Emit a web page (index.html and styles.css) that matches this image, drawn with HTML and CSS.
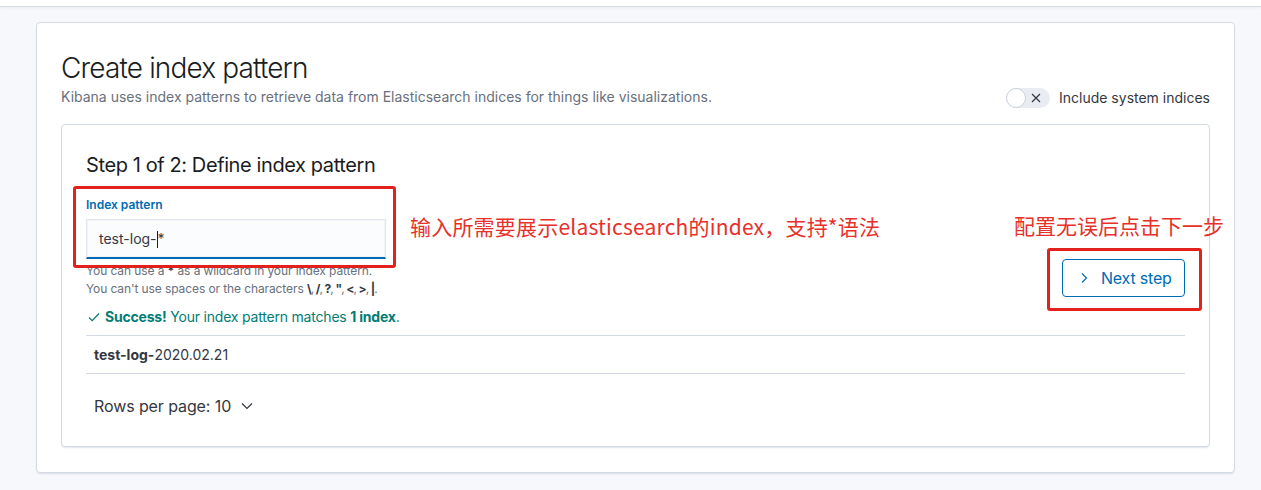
FILE: index.html
```html
<!DOCTYPE html>
<html lang="zh-CN">
<head>
<meta charset="utf-8">
<title>Create index pattern</title>
<link rel="stylesheet" href="styles.css">
</head>
<body>
<div class="topbar"></div>
<div class="page">
  <div class="panel">
    <div class="header">
      <div class="header-text">
        <h1 class="title">Create index pattern</h1>
        <p class="subtitle">Kibana uses index patterns to retrieve data from Elasticsearch indices for things like visualizations.</p>
      </div>
      <div class="toggle-wrap">
        <span class="switch">
          <span class="knob"></span>
          <svg class="switch-x" width="10" height="10" viewBox="0 0 10 10"><path d="M1 1L9 9M9 1L1 9" stroke="#343741" stroke-width="1.2" fill="none"/></svg>
        </span>
        <span class="toggle-label">Include system indices</span>
      </div>
    </div>

    <div class="inner">
      <h2 class="step">Step 1 of 2: Define index pattern</h2>
      <div class="step-row">
        <div class="form">
          <label class="label">Index pattern</label>
          <div class="input">test-log-<span class="caret"></span>*</div>
          <div class="help">
            <div>You can use a <b>*</b> as a wildcard in your index pattern.</div>
            <div>You can't use spaces or the characters <span class="chars"><b>\</b>, <b>/</b>, <b>?</b>, <b>"</b>, <b>&lt;</b>, <b>&gt;</b>, <b>|</b>.</span></div>
          </div>
          <div class="success">
            <svg class="check" width="12" height="10" viewBox="0 0 12 10"><path d="M1 5.5L4.2 8.6L11 1.5" stroke="#017d73" stroke-width="1.2" fill="none"/></svg>
            <span><b>Success!</b> Your index pattern matches <b>1 index</b>.</span>
          </div>
        </div>
        <div class="actions">
          <button class="next">
            <svg width="8" height="12" viewBox="0 0 8 12"><path d="M2 1.5L6.5 6L2 10.5" stroke="#006bb4" stroke-width="1.2" fill="none"/></svg>
            <span>Next step</span>
          </button>
        </div>
      </div>
      <div class="table">
        <div class="row"><b>test-log-</b>2020.02.21</div>
      </div>
      <div class="pager">
        <span>Rows per page: 10</span>
        <svg width="12" height="8" viewBox="0 0 12 8"><path d="M1 1.5L6 6.5L11 1.5" stroke="#343741" stroke-width="1.2" fill="none"/></svg>
      </div>
    </div>
  </div>
</div>

<div class="note-box box-input"></div>
<div class="note-box box-button"></div>
<div class="note note-input">输入所需要展示elasticsearch的index，支持*语法</div>
<div class="note note-button">配置无误后点击下一步</div>
</body>
</html>
```

FILE: styles.css
```css
* { box-sizing: border-box; }
html, body { margin: 0; padding: 0; }
body {
  position: relative;
  background: #f7f8fc;
  font-family: Inter, "Noto Sans", sans-serif;
  color: #343741;
  width: 1261px;
  height: 490px;
  overflow: hidden;
}
.topbar {
  height: 7px;
  background: #fff;
  border-bottom: 1px solid #d8dde6;
  box-shadow: 0 1px 3px rgba(0,0,0,0.06);
}
.page {
  padding: 15px 27px 0 36px;
}
.panel {
  width: 1199px;
  background: #fff;
  border: 1px solid #d3dae6;
  border-radius: 4px;
  box-shadow: 0 2px 2px -1px rgba(152,162,179,0.3);
  padding: 27px 24px 25px;
}
.header {
  display: flex;
  justify-content: space-between;
  align-items: flex-end;
}
.title {
  margin: 0;
  font-size: 28px;
  line-height: 36px;
  font-weight: 300;
  color: #1a1c21;
  letter-spacing: -0.85px;
}
.subtitle {
  margin: 1px 0 0;
  font-size: 14px;
  line-height: 20px;
  color: #69707d;
}
.toggle-wrap {
  display: flex;
  align-items: center;
  gap: 9px;
  height: 20px;
  margin-bottom: -1px;
}
.switch {
  position: relative;
  display: inline-flex;
  align-items: center;
  justify-content: flex-end;
  width: 44px;
  height: 20px;
  border-radius: 10px;
  background: #e9edf3;
  padding-right: 9px;
}
.knob {
  position: absolute;
  left: 0;
  top: 0;
  width: 20px;
  height: 20px;
  border-radius: 50%;
  background: #fff;
  border: 1px solid #c9d0da;
}
.toggle-label {
  font-size: 14px;
  line-height: 20px;
  color: #343741;
}
.inner {
  margin-top: 17px;
  background: #fff;
  border: 1px solid #d3dae6;
  border-radius: 4px;
  box-shadow: 0 2px 2px -1px rgba(152,162,179,0.3);
  padding: 26px 24px 24px;
}
.step {
  margin: 0;
  font-size: 20px;
  line-height: 28px;
  font-weight: 400;
  color: #1a1c21;
  letter-spacing: -0.4px;
}
.step-row {
  display: flex;
  justify-content: space-between;
  align-items: flex-start;
}
.form {
  width: 300px;
  padding-top: 19px;
}
.label {
  display: block;
  font-size: 12px;
  line-height: 14px;
  font-weight: 600;
  color: #006bb4;
}
.input {
  margin-top: 7px;
  height: 40px;
  width: 300px;
  background: #fbfcfd;
  border: 1px solid #e4e8ee;
  border-bottom: 2px solid #006bb4;
  box-shadow: inset 0 0 0 1px rgba(16,22,26,0.04);
  font-size: 14px;
  line-height: 37px;
  padding-left: 12px;
  color: #343741;
}
.caret {
  display: inline-block;
  width: 1px;
  height: 17px;
  background: #1a1c21;
  vertical-align: -4px;
}
.help {
  margin-top: 3px;
  font-size: 12px;
  line-height: 18px;
  color: #69707d;
  white-space: nowrap;
  letter-spacing: -0.1px;
}
.help b { color: #343741; font-weight: 700; }
.chars { letter-spacing: -0.9px; }
.success {
  margin-top: 9px;
  display: flex;
  align-items: center;
  gap: 5px;
  font-size: 14px;
  line-height: 20px;
  color: #017d73;
  white-space: nowrap;
  padding-left: 2px;
  letter-spacing: -0.2px;
}
.check { flex-shrink: 0; }
.actions {
  padding-top: 80px;
}
.next {
  display: flex;
  align-items: center;
  gap: 13px;
  height: 38px;
  width: 123px;
  padding: 0 0 0 17px;
  border: 1px solid #006bb4;
  border-radius: 4px;
  background: #fff;
  color: #006bb4;
  font-family: Inter, "Noto Sans", sans-serif;
  font-size: 16px;
  letter-spacing: -0.2px;
}
.table {
  margin-top: 8px;
  border-top: 1px solid #d3dae6;
  border-bottom: 1px solid #d3dae6;
}
.row {
  height: 37px;
  line-height: 37px;
  padding-left: 8px;
  font-size: 14px;
  color: #343741;
}
.pager {
  display: flex;
  align-items: center;
  gap: 10px;
  margin-top: 22px;
  padding-left: 8px;
  padding-bottom: 6px;
  font-size: 16px;
  line-height: 20px;
  color: #343741;
  letter-spacing: -0.1px;
}

/* screenshot annotations drawn over the page */
.note-box {
  position: absolute;
  border: 3px solid #e3211c;
  border-radius: 3px;
}
.box-input { left: 73px; top: 186px; width: 323px; height: 82px; }
.box-button { left: 1047px; top: 248px; width: 155px; height: 63px; }
.note {
  position: absolute;
  font-family: "Noto Sans CJK SC", "Noto Sans", sans-serif;
  font-size: 21px;
  line-height: 24px;
  color: #e8302a;
  white-space: nowrap;
}
.note-input { left: 410px; top: 214px; letter-spacing: 0.2px; }
.note-button { left: 1014px; top: 213px; }
```
